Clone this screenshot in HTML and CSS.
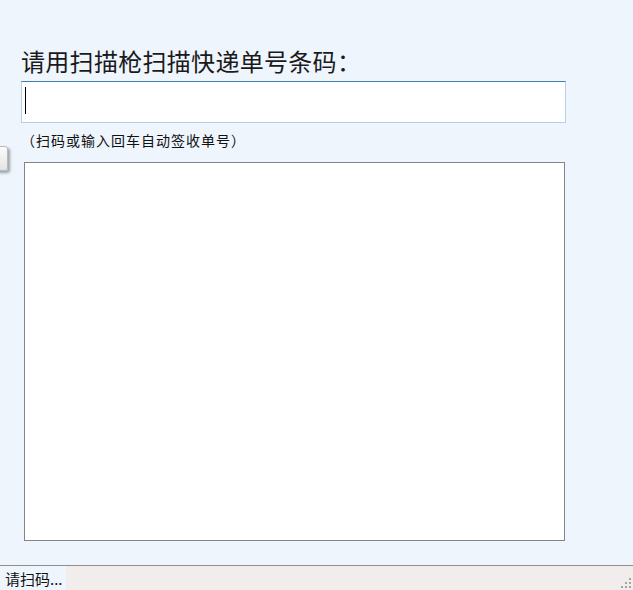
FILE: index.html
```html
<!DOCTYPE html>
<html lang="zh-CN">
<head>
  <meta charset="UTF-8" />
  <title>快递签收</title>
  <link rel="stylesheet" href="styles.css">
</head>
<body>
  <div class="window">
    <!-- Side toggle tab -->
    <div class="side-tab"></div>

    <!-- Scan form -->
    <div class="scan-panel">
      <h1 class="scan-title">请用扫描枪扫描快递单号条码：</h1>
      <div class="scan-input"><span class="caret"></span></div>
      <p class="scan-hint">（扫码或输入回车自动签收单号）</p>
      <div class="scan-log"></div>
    </div>

    <!-- Status bar -->
    <div class="status-bar">
      <div class="status-text">请扫码...</div>
      <div class="status-fill"></div>
      <div class="size-grip">
        <span></span><span></span><span></span>
        <span></span><span></span><span></span>
      </div>
    </div>
  </div>
</body>
</html>
```

FILE: styles.css
```css
* {
  margin: 0;
  padding: 0;
  box-sizing: border-box;
}

body {
  font-family: 'Noto Sans CJK SC', 'Noto Sans', sans-serif;
  background: #eef5fd;
  color: #111;
  width: 633px;
  height: 590px;
  overflow: hidden;
}

.window {
  position: relative;
  height: 590px;
  display: flex;
  flex-direction: column;
}

/* Side tab */
.side-tab {
  position: absolute;
  left: -10px;
  top: 146px;
  width: 18px;
  height: 25px;
  border: 1px solid #b9b9b9;
  border-radius: 3px;
  background: linear-gradient(180deg, #fbfbfb, #e4e4e4);
  box-shadow: 2px 2px 3px rgba(0, 0, 0, 0.35);
}

/* Scan panel */
.scan-panel {
  flex: 1;
  padding: 47px 0 0 21px;
  display: flex;
  flex-direction: column;
  align-items: flex-start;
}

.scan-title {
  font-size: 24px;
  font-weight: 400;
  line-height: 28px;
  letter-spacing: 0.3px;
  color: #1a1a1a;
}

.scan-input {
  margin-top: 6px;
  width: 545px;
  height: 42px;
  background: #fff;
  border: 1px solid #b6d0e8;
  border-top-color: #3f7fb3;
  padding: 5px 0 0 3px;
}

.caret {
  display: block;
  width: 1px;
  height: 27px;
  background: #000;
}

.scan-hint {
  font-size: 14px;
  line-height: 20px;
  letter-spacing: 1px;
  margin-top: 7px;
  color: #111;
}

.scan-log {
  margin-top: 12px;
  margin-left: 3px;
  width: 541px;
  height: 379px;
  background: #fff;
  border: 1px solid #858585;
}

/* Status bar */
.status-bar {
  height: 25px;
  border-top: 1px solid #8e8e8e;
  display: flex;
  position: relative;
}

.status-text {
  width: 66px;
  padding: 2px 0 0 5px;
  font-size: 15px;
  line-height: 21px;
  white-space: nowrap;
  background: #eef5fd;
}

.status-fill {
  flex: 1;
  background: #f0edec;
}

.size-grip {
  position: absolute;
  right: 2px;
  bottom: 2px;
  width: 11px;
  height: 11px;
}

.size-grip span {
  position: absolute;
  width: 2px;
  height: 2px;
  background: #a5a5a5;
}

.size-grip span:nth-child(1) { right: 0; bottom: 0; }
.size-grip span:nth-child(2) { right: 4px; bottom: 0; }
.size-grip span:nth-child(3) { right: 8px; bottom: 0; }
.size-grip span:nth-child(4) { right: 0; bottom: 4px; }
.size-grip span:nth-child(5) { right: 4px; bottom: 4px; }
.size-grip span:nth-child(6) { right: 0; bottom: 8px; }
```
